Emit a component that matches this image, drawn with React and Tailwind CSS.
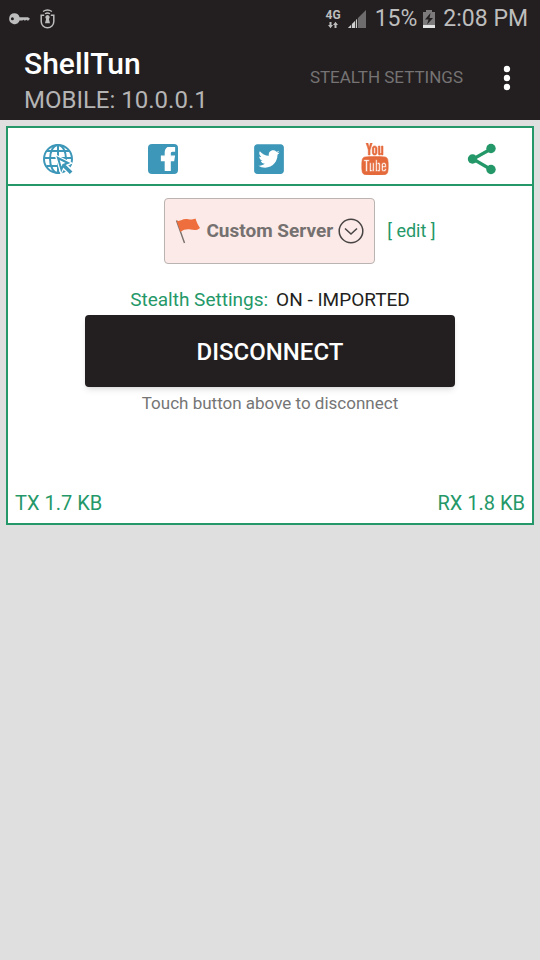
import React, { useState } from "react";
import { FaFacebookF, FaTwitterSquare } from "react-icons/fa";
import { TfiYoutube } from "react-icons/tfi";

const StatusBar = () => (
  <div className="h-9 flex items-center justify-between pl-2 pr-3 pt-0.5 text-[#bdbdbd]">
    <div className="flex items-center gap-2">
      <svg className="w-6 h-6" viewBox="0 0 24 24" fill="currentColor">
        <path fillRule="evenodd" d="M6.5 6.3a5.4 5.4 0 0 1 5.1 3.9H20l2 1.6-1.6 1.8h-1.2l-.9-.8-1 .8h-1l-.9-.8-1 .8h-2.8a5.4 5.4 0 1 1-5.1-7.3zM4.4 10.200a1.500 1.500 0 1 0 0 3 1.500 1.500 0 0 0 0-3z" />
      </svg>
      <svg className="w-4 h-6" viewBox="0 0 16 24" fill="none" stroke="currentColor" strokeWidth="1.5">
        <path d="M3 4.500q4.500-3 9 0M5 6.800q2.500-1.600 5 0" strokeWidth="1.300" />
        <path d="M4.200 8.300H1.200v6.200a6.300 6.300 0 0 0 12.600 0V8.300h-3" />
        <path d="M7.500 8a2.300 2.300 0 0 1 1.400 4l1.100 4.200H5L6.100 12a2.300 2.300 0 0 1 1.400-4z" fill="currentColor" stroke="none" />
      </svg>
    </div>
    <div className="flex items-center">
      <div className="flex flex-col items-center mr-1.5">
        <span className="text-[12px] leading-[11px] font-bold">4G</span>
        <svg className="w-3 h-2" viewBox="0 0 12 8" fill="currentColor">
          <path d="M2.500 1h2v3H6L3.500 7.300 1 4h1.500zM7.500 7h2V4H11L8.500.7 6 4h1.500z" />
        </svg>
      </div>
      <svg className="w-5 h-5 mr-2" viewBox="0 0 20 20">
        <path d="M19 1v18H1z" fill="#6e6c6c" />
        <path d="M10 10v9H1z" fill="#cfcfcf" />
        <path d="M4.500 12v8M8.500 9v11" stroke="#231f20" strokeWidth=".8" />
        <path d="M10.500 9v11" stroke="#231f20" strokeWidth=".8" />
      </svg>
      <span className="text-[23px]">15%</span>
      <svg className="w-4 h-5 ml-1 mr-1.5" viewBox="0 0 16 20">
        <path d="M5 1h6v2h3v16H2V3h3z" fill="#7c7a7a" />
        <path d="M2 16h12v3H2z" fill="#e4e4e4" />
        <path d="M9.500 4L4 10.500h3.500L6 15.500l6-6.500H8.500z" fill="#231f20" />
      </svg>
      <span className="text-[23px]">2:08 PM</span>
    </div>
  </div>
);

const GlobeIcon = () => (
  <svg className="w-8 h-8" viewBox="0 0 32 32" fill="none" stroke="#3d97b9" strokeWidth="2">
    <circle cx="16" cy="16" r="14" />
    <ellipse cx="16" cy="16" rx="8" ry="14" />
    <path d="M16 2v28M2 15h28M4.500 8h23M4.500 23h23" />
    <path d="M15.500 14.500l11 5.500-3.800 1.400 6.300 6.600-1.600 1.600-6.400-6.300-1.700 3.700z" fill="#fff" stroke="#fff" strokeWidth="4" />
    <path d="M16 15l10 5-4 1.700 7 6.800-1.200 1.200-6.800-7-1.600 3.800z" fill="#fff" strokeWidth="2" />
  </svg>
);

const ShareIcon = () => (
  <svg className="w-8 h-8" viewBox="0 0 32 32" fill="#249868" stroke="#249868">
    <path d="M25 6L7 16l18 10.500" fill="none" strokeWidth="3.200" />
    <circle cx="25" cy="5.500" r="4.700" stroke="none" />
    <circle cx="6.500" cy="16" r="4.700" stroke="none" />
    <circle cx="25" cy="26.500" r="4.700" stroke="none" />
  </svg>
);

const FlagIcon = () => (
  <svg className="w-7 h-7" viewBox="0 0 28 28">
    <path d="M2.500 3.500L10.500 26" stroke="#77706c" strokeWidth="1.400" />
    <path d="M2.500 3.500c3.500 1.500 5.500-1.500 9-1.500 4 0 5 1.500 10-.500 1 3.500 2.500 6.500 4.500 9.500-3.500 3-6.500 2-9.500 1.500-3.500-.5-7 0-10 2.500z" fill="#ee6f3d" />
  </svg>
);

const links = [
  { label: "Website", icon: <GlobeIcon /> },
  {
    label: "Facebook",
    icon: (
      <span className="w-8 h-8 flex p-px">
        <span className="grow rounded-sm bg-[#3d97b9] text-white flex items-center justify-end pr-0.5">
          <FaFacebookF className="w-4 h-6" stroke="white" strokeWidth="30" />
        </span>
      </span>
    ),
  },
  { label: "Twitter", icon: <FaTwitterSquare className="w-[34px] h-[34px] text-[#3d97b9]" /> },
  { label: "YouTube", icon: <TfiYoutube className="w-8 h-8 mr-0.5 text-[#e56a3b]" stroke="currentColor" strokeWidth="0.3" /> },
  { label: "Share", icon: <ShareIcon /> },
];

const App = () => {
  const [connected, setConnected] = useState(true);

  return (
    <div className="min-h-screen bg-[#dfdfdf] font-[Roboto,sans-serif]">
      {/* Header */}
      <header className="bg-[#231f20]">
        <StatusBar />
        <div className="h-21 flex items-center justify-between pl-6 pr-[21px]">
          <div className="pt-2">
            <h1 className="text-[30px] leading-9 font-medium text-white">ShellTun</h1>
            <p className="text-2xl leading-9 text-[#b5b4b4]">MOBILE: 10.0.0.1</p>
          </div>
          <div className="flex items-center gap-8">
            <button className="text-[17px] text-[#757373]">STEALTH SETTINGS</button>
            <button aria-label="More options" className="w-6 h-8 flex justify-center">
              <svg className="w-2 h-8" viewBox="0 0 8 32" fill="#fff">
                <circle cx="4" cy="7" r="3.200" />
                <circle cx="4" cy="16" r="3.200" />
                <circle cx="4" cy="25" r="3.200" />
              </svg>
            </button>
          </div>
        </div>
      </header>

      {/* Connection panel */}
      <main className="m-1.5 bg-white border-2 border-[#249868] text-[#249868]">
        <nav className="h-[58px] pt-1.5 px-[34px] flex items-center justify-between border-b-2 border-[#249868]">
          {links.map((link) => (
            <a key={link.label} href="#" aria-label={link.label}>
              {link.icon}
            </a>
          ))}
        </nav>

        <div className="pt-3 flex flex-col items-center">
          <div className="flex items-center gap-3 ml-15">
            <button className="h-[66px] px-[9px] flex items-center gap-1 rounded-sm border border-[#b9b3b1] bg-[#fbeae7] text-[19px] font-bold text-[#757170]">
              <FlagIcon />
              Custom Server
              <svg className="w-7 h-7" viewBox="0 0 28 28" fill="none" stroke="#484444" strokeWidth="1.500">
                <circle cx="14" cy="14" r="11.800" />
                <path d="M8 11.500l6 5.500 6-5.500" />
              </svg>
            </button>
            <a href="#" className="text-lg">[ edit ]</a>
          </div>

          <p className="mt-5 pt-0.5 pb-px text-[19px] leading-7 text-[#231f20]">
            <span className="mr-2 text-[#249868]">Stealth Settings:</span>
            ON - IMPORTED
          </p>
          <button
            onClick={() => setConnected(!connected)}
            className="w-[370px] max-w-full h-18 rounded-sm bg-[#231f20] pt-0.5 text-2xl font-medium text-white shadow-md"
          >
            {connected ? "DISCONNECT" : "CONNECT"}
          </button>
          <p className="mt-1 text-[17px] leading-6 text-[#757575]">
            Touch button above to {connected ? "disconnect" : "connect"}
          </p>
        </div>

        {/* Traffic */}
        <div className="mt-[74px] pb-1.5 px-[7px] flex justify-between text-xl leading-7">
          <span>TX 1.7 KB</span>
          <span>RX 1.8 KB</span>
        </div>
      </main>
    </div>
  );
};

export default App;
